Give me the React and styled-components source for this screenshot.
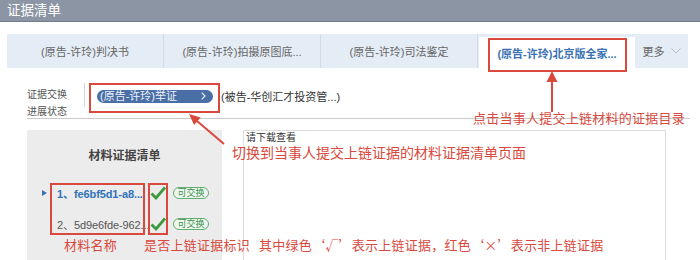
import React from "react";
import styled, { createGlobalStyle } from "styled-components";

const GlobalStyle = createGlobalStyle`
	html, body {
		margin: 0;
		padding: 0;
		background: #fff;
	}
	body {
		font-family: "Liberation Sans", "Noto Sans CJK SC", sans-serif;
	}
`;

const RED = "#d9493d";

const Page = styled.div`
	position: relative;
	width: 700px;
	height: 260px;
	overflow: hidden;
	background: #fff;
	display: flex;
	flex-direction: column;
`;

const Header = styled.div`
	height: 21px;
	flex: 0 0 21px;
	background: #8c95a4;
	border-bottom: 1px solid #747d8c;
	color: #fff;
	font-size: 13.5px;
	line-height: 21px;
	padding-left: 7px;
`;

const TabBar = styled.div`
	display: flex;
	height: 34px;
	margin: 12px 12px 0 7px;
	background: #e4ecf5;
`;

const Tab = styled.div`
	flex: 0 0 ${(p) => (p.$active ? "156px" : "157px")};
	box-sizing: border-box;
	display: flex;
	align-items: center;
	justify-content: center;
	font-size: 11px;
	color: ${(p) => (p.$active ? "#3a72b3" : "#666")};
	font-weight: ${(p) => (p.$active ? "bold" : "normal")};
	background: ${(p) => (p.$active ? "#fff" : "transparent")};
	margin-top: ${(p) => (p.$active ? "3px" : "0")};
	border-right: ${(p) => (p.$active ? "none" : "1px solid #d2dce8")};
	margin-left: ${(p) => (p.$active ? "1px" : "0")};
`;

const More = styled.div`
	flex: 1;
	display: flex;
	align-items: center;
	justify-content: center;
	gap: 6px;
	font-size: 11px;
	color: #666;
`;

const Body = styled.div`
	flex: 1;
	display: flex;
	flex-direction: column;
	padding: 0 10px 0 27px;
	min-height: 0;
`;

const StatusRow = styled.div`
	display: flex;
	align-items: flex-start;
	height: 35px;
	padding-top: 15px;
	border-bottom: 1px solid #cacaca;
`;

const StatusLabel = styled.div`
	margin-top: 3px;
	font-size: 10px;
	line-height: 17px;
	color: #555;
`;

const Divider = styled.div`
	width: 1px;
	height: 24px;
	background: #d4d4d4;
	margin: 0 12px 0 17px;
`;

const Steps = styled.div`
	display: flex;
	align-items: center;
	margin-top: 5px;
`;

const StepPill = styled.div`
	display: flex;
	align-items: center;
	justify-content: space-between;
	width: 116px;
	height: 13px;
	box-sizing: border-box;
	padding: 0 7px 0 3px;
	border-radius: 7px;
	background: #4a6fa6;
	color: #eef2f8;
	font-size: 11px;
	line-height: 13px;
`;

const StepText = styled.div`
	margin-left: 8px;
	font-size: 11px;
	color: #333;
`;

const Content = styled.div`
	flex: 1;
	display: flex;
	gap: 21px;
	margin-top: 11px;
	min-height: 0;
`;

const ListPanel = styled.div`
	flex: 0 0 195px;
	background: #ececec;
`;

const ListTitle = styled.div`
	margin-top: 18px;
	text-align: center;
	font-size: 12px;
	line-height: 16px;
	font-weight: bold;
	color: #444;
`;

const List = styled.div`
	margin-top: 13px;
`;

const Item = styled.div`
	display: flex;
	align-items: center;
	height: 31px;
	padding-left: 15px;
`;

const Marker = styled.div`
	width: 0;
	height: 0;
	border-top: 3.5px solid transparent;
	border-bottom: 3.5px solid transparent;
	border-left: 5px solid ${(p) => (p.$show ? "#3a72b3" : "transparent")};
	margin-right: 10px;
`;

const ItemName = styled.div`
	flex: 0 0 92px;
	min-width: 0;
	white-space: nowrap;
	font-size: 11px;
	letter-spacing: -0.1px;
	font-weight: ${(p) => (p.$active ? "bold" : "normal")};
	color: ${(p) => (p.$active ? "#2f73bb" : "#555")};
`;

const Check = styled.svg`
	flex: 0 0 16px;
	margin-left: 1px;
	width: 16px;
	height: 14px;
`;

const Badge = styled.div`
	flex: 0 0 36px;
	margin-left: 7px;
	height: 12px;
	box-sizing: border-box;
	border: 1px solid #62ad70;
	border-radius: 7px;
	background: #eef8ef;
	color: #3f9350;
	font-size: 9px;
	line-height: 10px;
	text-align: center;
`;

const Viewer = styled.div`
	flex: 0 0 423px;
	box-sizing: border-box;
	border: 1px solid #dcdcdc;
	border-bottom: none;
	padding: 1px 0 0 2px;
	font-size: 10px;
	line-height: 12px;
	color: #333;
`;

/* annotation layer drawn on top of the screenshot */
const Overlay = styled.svg`
	position: absolute;
	left: 0;
	top: 0;
	width: 700px;
	height: 260px;
	pointer-events: none;
`;

const Box = styled.div`
	position: absolute;
	left: ${(p) => p.$x}px;
	top: ${(p) => p.$y}px;
	width: ${(p) => p.$w}px;
	height: ${(p) => p.$h}px;
	box-sizing: border-box;
	border: 2px solid ${RED};
`;

const Note = styled.div`
	position: absolute;
	left: ${(p) => p.$x}px;
	top: ${(p) => p.$y}px;
	font-family: "Noto Sans CJK SC", sans-serif;
	font-size: ${(p) => p.$size || 13}px;
	letter-spacing: ${(p) => (p.$size === 14 ? 0 : 0.25)}px;
	line-height: 16px;
	white-space: nowrap;
	color: ${RED};
`;

const Gap = styled.span`
	display: inline-block;
	width: 9px;
`;

const tabs = ["(原告-许玲)判决书", "(原告-许玲)拍摄原图底...", "(原告-许玲)司法鉴定"];

const items = [
	{ name: "1、fe6bf5d1-a8...", active: true },
	{ name: "2、5d9e6fde-962...", active: false },
];

const CheckIcon = () => (
	<Check viewBox="0 0 16 14">
		<path d="M1.5 7.5 L6 12 L15 1.5" fill="none" stroke="#3d9a3f" strokeWidth="2.8" />
	</Check>
);

export default function App() {
	return (
		<>
			<GlobalStyle />
			<Page>
				<Header>证据清单</Header>
				<TabBar>
					{tabs.map((t) => (
						<Tab key={t}>{t}</Tab>
					))}
					<Tab $active>(原告-许玲)北京版全家...</Tab>
					<More>
						更多
						<svg width="10" height="6" viewBox="0 0 10 6">
							<path d="M0.5 0.5 L5 5 L9.5 0.5" fill="none" stroke="#b5bcc6" strokeWidth="1" />
						</svg>
					</More>
				</TabBar>
				<Body>
					<StatusRow>
						<StatusLabel>
							证据交换
							<br />
							进展状态
						</StatusLabel>
						<Divider />
						<Steps>
							<StepPill>
								<span>(原告-许玲)举证</span>
								<svg width="5" height="8" viewBox="0 0 5 8">
									<path d="M0.7 0.7 L4 4 L0.7 7.3" fill="none" stroke="#e8eef7" strokeWidth="1.2" />
								</svg>
							</StepPill>
							<StepText>(被告-华创汇才投资管...)</StepText>
						</Steps>
					</StatusRow>
					<Content>
						<ListPanel>
							<ListTitle>材料证据清单</ListTitle>
							<List>
								{items.map((it) => (
									<Item key={it.name}>
										<Marker $show={it.active} />
										<ItemName $active={it.active}>{it.name}</ItemName>
										<CheckIcon />
										<Badge>可交换</Badge>
									</Item>
								))}
							</List>
						</ListPanel>
						<Viewer>请下载查看</Viewer>
					</Content>
				</Body>

				<Box $x={488} $y={38} $w={139} $h={34} />
				<Box $x={89} $y={83} $w={131} $h={30} />
				<Box $x={50} $y={183} $w={95} $h={52} />
				<Box $x={148} $y={183} $w={20} $h={52} />

				<Overlay viewBox="0 0 700 260">
					<line x1="552" y1="112" x2="552" y2="80" stroke={RED} strokeWidth="2" />
					<polygon points="552,71 546.5,82 557.5,82" fill={RED} />
					<line x1="224" y1="144" x2="197" y2="121" stroke={RED} strokeWidth="2" />
					<polygon points="189,114 200.6,117.4 194.1,125" fill={RED} />
				</Overlay>

				<Note $x={473} $y={110}>点击当事人提交上链材料的证据目录</Note>
				<Note $x={232} $y={144} $size={14}>
					切换到当事人提交上链证据的材料证据清单页面
				</Note>
				<Note $x={64} $y={237}>材料名称</Note>
				<Note $x={144} $y={237}>
					是否上链证据标识
					<Gap />
					其中绿色‘√’表示上链证据，红色‘×’表示非上链证据
				</Note>
			</Page>
		</>
	);
}
